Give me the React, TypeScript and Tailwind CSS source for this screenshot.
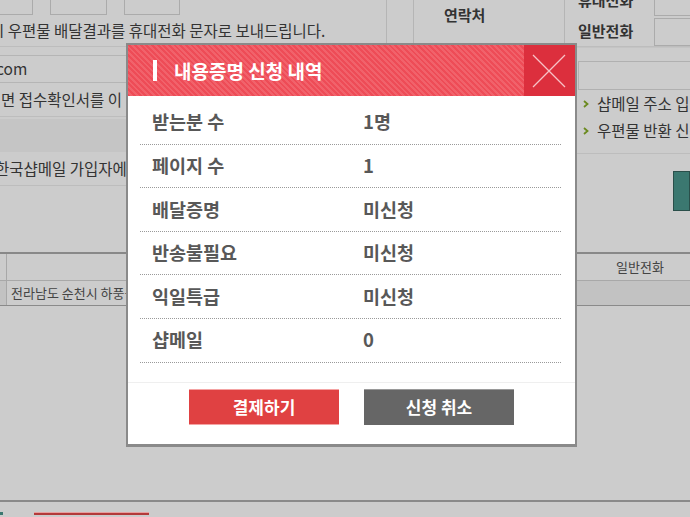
import React from 'react';

const rows = [
  { label: '받는분 수', value: '1명' },
  { label: '페이지 수', value: '1' },
  { label: '배달증명', value: '미신청' },
  { label: '반송불필요', value: '미신청' },
  { label: '익일특급', value: '미신청' },
  { label: '샵메일', value: '0' },
];

const Bullet = () => (
  <svg width="6" height="8" viewBox="0 0 6 8" className="shrink-0">
    <path d="M1 1 L4.5 4 L1 7" fill="none" stroke="#6b8a1f" strokeWidth="1.8" />
  </svg>
);

const Modal = () => {
  return (
    <div className="absolute left-[126px] top-[43px] w-[451px] bg-white border-2 border-b-[3px] border-[#8a8a8a]">
      <div className="flex h-[51px]">
        <div className="flex-1 flex items-center pl-[25px] bg-[repeating-linear-gradient(45deg,#ee4c57_0px,#ee4c57_2px,#f1626b_2px,#f1626b_4px)]">
          <span className="w-[4px] h-[21px] bg-white" />
          <span className="ml-[17px] text-[19px] leading-none font-bold text-white">내용증명 신청 내역</span>
        </div>
        <button className="w-[51px] h-[51px] bg-[#dc2f3d] flex items-center justify-center">
          <svg width="51" height="51" viewBox="0 0 51 51">
            <path d="M9 10 L41 42 M41 10 L9 42" stroke="#f7c2c6" strokeWidth="1.3" />
          </svg>
        </button>
      </div>
      <div className="pt-[5px] pl-[12px] pr-[14px]">
        {rows.map((r) => (
          <div key={r.label} className="flex items-center h-[43.6px] border-b border-dotted border-[#9a9a9a] text-[18.5px] font-bold text-[#585858]">
            <span className="w-[223px] pl-[12px]">{r.label}</span>
            <span>{r.value}</span>
          </div>
        ))}
      </div>
      <div className="mt-[19px] border-t border-[#efefef] pt-[6px] pb-[19px] flex justify-center gap-[25px]">
        <button className="w-[150px] h-[36px] bg-[#e04142] border-t border-b border-[#f4a3a3] text-white text-[17px] font-bold">결제하기</button>
        <button className="w-[150px] h-[36px] bg-[#666666] border-t border-[#9a9a9a] text-white text-[17px] font-bold">신청 취소</button>
      </div>
    </div>
  );
};

const App = () => {
  return (
    <div className="relative w-[690px] h-[517px] overflow-hidden bg-[#cccccc] text-[#333] font-['Noto_Sans_CJK_KR','Noto_Sans',sans-serif]">
      {/* top band */}
      <div className="flex h-[47px] border-b border-[#bdbdbd]">
        <div className="w-[386px] flex flex-col">
          <div className="flex h-[15px]">
            <div className="ml-[-1px] w-[34px] border-r border-b border-[#ababab]" />
            <div className="ml-[17px] w-[57px] border-l border-r border-b border-[#ababab]" />
            <div className="ml-[17px] w-[56px] border-l border-r border-b border-[#ababab]" />
          </div>
          <div className="ml-[-10px] mt-[5px] text-[15.5px] leading-[20px] whitespace-nowrap">시 우편물 배달결과를 휴대전화 문자로 보내드립니다.</div>
        </div>
        <div className="w-[28px] border-l border-r border-[#b5b5b5]" />
        <div className="w-[150px] pl-[30px] pt-[5px] text-[15px] font-bold leading-[20px]">연락처</div>
        <div className="flex-1 border-l border-[#b5b5b5] flex flex-col pl-[13px]">
          <div className="flex h-[17px]">
            <div className="mt-[-10px] w-[62px] text-[15px] font-bold leading-[20px] whitespace-nowrap">휴대전화</div>
            <div className="ml-[14px] flex-1 border-l border-b border-[#ababab]" />
          </div>
          <div className="flex h-[30px] items-center">
            <div className="w-[62px] text-[15px] font-bold leading-[20px] whitespace-nowrap">일반전화</div>
            <div className="ml-[14px] mt-[2px] flex-1 h-[28px] border border-r-0 border-[#ababab]" />
          </div>
        </div>
      </div>

      {/* middle */}
      <div className="flex h-[205px]">
        <div className="w-[127px] flex flex-col">
          <div className="mt-[8px] h-[28px] ml-[-1px] border border-[#b5b5b5] flex items-center text-[15.5px] leading-none">
            <span className="ml-[-4px]">com</span>
          </div>
          <div className="h-[34px] flex items-center text-[15.5px] whitespace-nowrap pl-[1px] border-b border-[#bdbdbd]">면 접수확인서를 이</div>
          <div className="mt-[2px] h-[33px] bg-[#c5c5c5]" />
          <div className="h-[34px] flex items-center text-[15.5px] whitespace-nowrap ml-[-5px] border-b border-[#bdbdbd]">한국샵메일 가입자에</div>
        </div>
        <div className="flex-1" />
        <div className="w-[114px] flex flex-col">
          <div className="h-[8px] border-t border-[#c4c4c4]" />
          <div className="mt-[6px] ml-[2px] h-[29px] border border-r-0 border-[#b0b0b0]" />
          <div className="mt-[4px] flex items-center gap-[8px] pl-[7px] h-[20px] text-[15.5px] whitespace-nowrap">
            <Bullet />
            <span>샵메일 주소 입력</span>
          </div>
          <div className="mt-[7px] flex items-center gap-[8px] pl-[7px] h-[20px] text-[15.5px] whitespace-nowrap">
            <Bullet />
            <span>우편물 반환 신청</span>
          </div>
          <div className="mt-[12px] border-t border-[#bdbdbd]" />
          <div className="mt-[17px] ml-[97px] h-[40px] bg-[#3b7870] border border-[#2a4f4a]" />
        </div>
      </div>

      {/* table */}
      <div className="border-t-2 border-[#888888]">
        <div className="flex h-[27px] border-b border-[#a8a8a8]">
          <div className="w-[7px] border-r border-[#a8a8a8]" />
          <div className="flex-1" />
          <div className="w-[100px] flex items-center justify-center text-[13px] text-[#444]">일반전화</div>
        </div>
        <div className="flex h-[25px] border-b border-[#8a8a8a]">
          <div className="w-[7px] bg-[#c2c2c2] border-r border-[#a8a8a8]" />
          <div className="w-[300px] flex items-center pl-[4px] text-[13px] text-[#444] whitespace-nowrap">전라남도 순천시 하풍동 123</div>
          <div className="flex-1 bg-[#c2c2c2]" />
        </div>
      </div>

      {/* bottom */}
      <div className="mt-[194px] border-t-2 border-[#8a8a8a] h-[15px] flex items-end">
        <div className="w-[3px] h-[3px] bg-[#3b7870]" />
        <div className="ml-[31px] w-[115px] h-[3px] bg-[#b33a3a] border-t border-[#e7a0a0]" />
      </div>

      <Modal />
    </div>
  );
};

export default App;
